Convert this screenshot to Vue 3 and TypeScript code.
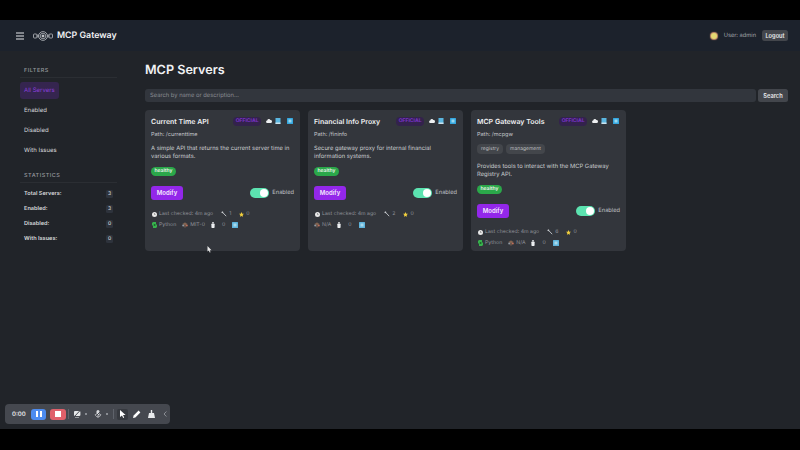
<script setup lang="ts">
interface Card {
  title: string
  path: string
  tags: string[]
  desc: string
  tools: number
  lang: boolean
  license: string
}
const cards: Card[] = [
  { title: 'Current Time API', path: 'Path: /currenttime', tags: [], desc: 'A simple API that returns the current server time in various formats.', tools: 1, lang: true, license: 'MIT-0' },
  { title: 'Financial Info Proxy', path: 'Path: /fininfo', tags: [], desc: 'Secure gateway proxy for internal financial information systems.', tools: 2, lang: false, license: 'N/A' },
  { title: 'MCP Gateway Tools', path: 'Path: /mcpgw', tags: ['registry', 'management'], desc: 'Provides tools to interact with the MCP Gateway Registry API.', tools: 6, lang: true, license: 'N/A' },
]
const filters = ['All Servers', 'Enabled', 'Disabled', 'With Issues']
const stats = [
  ['Total Servers:', '3'],
  ['Enabled:', '3'],
  ['Disabled:', '0'],
  ['With Issues:', '0'],
]
</script>

<template>
  <div class="screen">
    <div class="band"></div>
    <header class="topbar">
      <svg class="burger" viewBox="0 0 8 8" width="8" height="8"><path d="M0 1h8M0 4h8M0 7h8" stroke="#e4e6e9" stroke-width="1.2"/></svg>
      <svg class="logo" viewBox="0 0 20 10" width="20" height="10" fill="none" stroke="#cfd1d5" stroke-width=".7">
        <circle cx="10" cy="5" r="4.4"/><circle cx="10" cy="5" r="2.8"/><circle cx="10" cy="5" r="1.1" fill="#cfd1d5"/>
        <rect x=".5" y="3" width="3.4" height="4" rx=".8"/><rect x="16.1" y="3" width="3.4" height="4" rx=".8"/>
        <path d="M3.9 4.2h1.8M3.9 5.8h1.8M14.3 4.2h1.8M14.3 5.8h1.8"/>
      </svg>
      <span class="brand">MCP Gateway</span>
      <span class="spacer"></span>
      <span class="sun"></span>
      <span class="user">User: admin</span>
      <button class="ghost logout">Logout</button>
    </header>
    <div class="body">
      <aside class="side">
        <h3 class="side-h">FILTERS</h3>
        <ul class="filters">
          <li v-for="(f, i) in filters" :key="f" :class="{ active: i === 0 }">{{ f }}</li>
        </ul>
        <h3 class="side-h stats-h">STATISTICS</h3>
        <div v-for="s in stats" :key="s[0]" class="stat">
          <span>{{ s[0] }}</span><b>{{ s[1] }}</b>
        </div>
      </aside>
      <main class="main">
        <h1>MCP Servers</h1>
        <div class="search">
          <div class="input">Search by name or description...</div>
          <button class="ghost">Search</button>
        </div>
        <div class="grid">
          <article v-for="c in cards" :key="c.title" class="card">
            <div class="head">
              <h2>{{ c.title }}</h2>
              <span class="official">OFFICIAL</span>
              <svg width="6" height="4" viewBox="0 0 6 4" class="ic"><path d="M1.4 4a1.2 1.2 0 0 1-.2-2.4A1.7 1.7 0 0 1 4.4 1 1.5 1.5 0 0 1 4.6 4z" fill="#eef0f2"/></svg>
              <svg width="6" height="6" viewBox="0 0 6 6" class="ic book"><rect x=".5" width="5" height="6" fill="#5bb6e0"/><rect x=".5" y="4.6" width="5" height="1.2" fill="#e8eef2"/></svg>
              <svg width="6" height="6" viewBox="0 0 6 6" class="ic last"><rect width="6" height="6" rx=".5" fill="#35a7df"/><rect x="1.5" y="1.5" width="3" height="3" fill="#9ad8ef"/></svg>
            </div>
            <div class="path">{{ c.path }}</div>
            <div v-if="c.tags.length" class="tags"><span v-for="t in c.tags" :key="t">{{ t }}</span></div>
            <p class="desc">{{ c.desc }}</p>
            <div class="status"><span class="healthy">healthy</span></div>
            <div class="actions">
              <button class="modify">Modify</button>
              <span class="spacer"></span>
              <span class="toggle"><i></i></span>
              <span class="en">Enabled</span>
            </div>
            <div class="meta">
              <span class="m first"><svg width="5" height="5" viewBox="0 0 5 5"><circle cx="2.5" cy="2.5" r="2.5" fill="#e8e8e8"/><path d="M2.5 1v1.5h1" stroke="#555" stroke-width=".5" fill="none"/></svg>Last checked: 4m ago</span>
              <span class="m"><svg width="6" height="6" viewBox="0 0 6 6"><path d="M1.6 1.4 5.2 5.2" stroke="#c9ccd0" stroke-width=".9"/><path d="M.3 1.3 1.3.3l1 .6-.2 1-1 .3z" fill="#c9ccd0"/></svg>{{ c.tools }}</span>
              <span class="m"><svg width="5" height="5" viewBox="0 0 6 6"><path d="M3 0l.9 2 2.1.2-1.6 1.4.5 2.2L3 4.7 1.1 5.8l.5-2.2L0 2.2 2.1 2z" fill="#f1cf3e"/></svg>0</span>
            </div>
            <div class="meta second">
              <span v-if="c.lang" class="m first"><svg width="5" height="6" viewBox="0 0 5 6"><path d="M1 0h3v2.5H5V5L4 6H1V3.5H0V1z" fill="#37b24d"/><rect x="1.8" y="2" width="1.6" height="2" fill="#1e6b2d"/></svg>Python</span>
              <span class="m"><svg width="6" height="6" viewBox="0 0 6 6"><path d="M3 .5v5M.8 2h4.4" stroke="#b08060" stroke-width=".8"/><circle cx="1.2" cy="3.6" r="1" fill="#8f9aa5"/><circle cx="4.8" cy="3.6" r="1" fill="#c0705a"/></svg>{{ c.license }}</span>
              <span class="m"><svg width="4" height="6" viewBox="0 0 4 6"><rect x="1.2" width="1.6" height="1.4" fill="#d8dadd"/><rect x=".4" y="1.4" width="3.2" height="4.6" rx=".8" fill="#eceef0"/></svg></span>
              <span class="m zero">0</span>
              <svg class="zero" width="6" height="6" viewBox="0 0 6 6"><rect width="6" height="6" rx=".5" fill="#5fb4dc"/><rect x="1.5" y="1.5" width="3" height="3" fill="#a8d8ea"/></svg>
            </div>
          </article>
        </div>
      </main>
    </div>
    <div class="band bottom"></div>
    <div class="recorder">
      <span class="time">0:00</span>
      <span class="rbtn blue"><svg width="6" height="6" viewBox="0 0 6 6"><path d="M0 0h2v6H0zM4 0h2v6H4z" fill="#fff"/></svg></span>
      <span class="rbtn red"><svg width="6" height="6" viewBox="0 0 6 6"><path d="M0 0h6v6H0z" fill="#fff"/></svg></span>
      <span class="sep"></span>
      <svg class="r1" width="8" height="8" viewBox="0 0 8 8"><rect x="1" y="1" width="6.4" height="5" rx="1" fill="#e6e8ea"/><path d="M2 8h4" stroke="#e6e8ea"/><path d="M1 7 7 .6" stroke="#45484f" stroke-width="1"/></svg>
      <span class="caret"></span>
      <svg class="r2" width="8" height="8" viewBox="0 0 8 8"><rect x="2.5" y="0" width="3" height="5.5" rx="1.5" fill="#d8dadd"/><path d="M1.2 4a2.8 2.8 0 0 0 5.6 0M4 7v1" stroke="#d8dadd" stroke-width=".7" fill="none"/><path d="M.6 7.4 7.4.6" stroke="#45484f" stroke-width="1"/></svg>
      <span class="caret"></span>
      <span class="sep s2"></span>
      <span class="cursor"><svg width="7" height="8" viewBox="0 0 7 8"><path d="M1 0v7l2-1.6L4.2 8l1-.5L4 5h2.6z" fill="#fff"/></svg></span>
      <svg class="r3" width="8" height="8" viewBox="0 0 8 8"><path d="M0 8l.6-2.4L5.6.6l1.8 1.8-5 5z" fill="#fff"/></svg>
      <svg class="r4" width="7" height="8" viewBox="0 0 7 8"><path d="M2.8 0h1.4v3H6l1 5H0l1-5h1.8z" fill="#e8eaec"/></svg>
      <svg class="r5" width="4" height="6" viewBox="0 0 4 6"><path d="M3.4.5 1 3l2.4 2.5" stroke="#8b8e94" fill="none"/></svg>
    </div>
    <svg class="pointer" width="5" height="7" viewBox="0 0 5 7"><path d="M.5 0v5.6l1.3-1 .9 2 .9-.4-.9-1.9H4.5z" fill="#e8e8e8"/></svg>
  </div>
</template>

<style>
html, body { margin: 0; background: #000; }
</style>

<style scoped>
.screen {
  position: relative;
  width: 800px;
  height: 450px;
  display: flex;
  flex-direction: column;
  background: #000;
  overflow: hidden;
  font-family: Inter, "Liberation Sans", sans-serif;
  color: #e6e7e9;
  text-rendering: geometricPrecision;
}
.band { height: 20px; flex: none; background: #000; }
.band.bottom { height: 21px; }
.topbar {
  height: 31px;
  flex: none;
  display: flex;
  align-items: center;
  padding: 0 12px 0 16px;
  background: #1c222c;
}
.burger { margin-right: 9px; }
.logo { margin-right: 4px; }
.brand { font-size: 8.8px; font-weight: 600; color: #f0f1f3; }
.spacer { flex: 1; }
.sun { width: 6px; height: 6px; border-radius: 50%; background: #e3d873; box-shadow: 0 0 1px 1px #c98d6c; margin-right: 7px; }
.user { font-size: 5.7px; color: #a3a6ab; margin-right: 6px; }
button { font-family: inherit; border: 0; padding: 0; }
.ghost { width: 30px; height: 13px; background: #43464c; color: #e8e9eb; font-size: 5.7px; font-weight: 600; border-radius: 2.5px; }
.logout { width: 26px; height: 11px; }
.body { flex: 1; display: flex; background: #212429; min-height: 0; }
.side { width: 97px; margin-left: 20px; flex: none; padding-top: 17px; }
.side-h {
  margin: 0;
  font-size: 5.5px;
  font-weight: 500;
  letter-spacing: .5px;
  color: #96999e;
  padding: 0 0 3px 4px;
  border-bottom: 1px solid #2b2e33;
}
.filters { list-style: none; margin: 4px 0 0; padding: 0; }
.filters li {
  height: 17px;
  line-height: 17px;
  margin-bottom: 3px;
  padding-left: 4px;
  font-size: 6px;
  color: #d4d6d9;
  width: max-content;
  min-width: 30px;
  border-radius: 3px;
}
.filters li.active { background: #35254f; color: #8b3fd9; width: 31px; padding-right: 4px; }
.stats-h { margin-top: 14px; margin-bottom: 3px; }
.stat {
  display: flex;
  justify-content: space-between;
  align-items: center;
  height: 15.2px;
  padding: 0 4px;
  font-size: 5.6px;
  font-weight: 600;
  color: #d6d8db;
}
.stat b { background: #2e333c; font-size: 5px; width: 7px; height: 8px; line-height: 8px; text-align: center; border-radius: 1.5px; font-weight: 500; }
.main { flex: 1; padding: 12px 12px 0 28px; min-width: 0; }
h1 { margin: 0; font-size: 12.6px; line-height: 16px; font-weight: 600; color: #f1f2f4; }
.search { display: flex; gap: 2px; margin-top: 10px; }
.input {
  flex: 1;
  height: 13px;
  line-height: 13px;
  padding-left: 5px;
  font-size: 5.8px;
  color: #898c92;
  background: #32363d;
  border-radius: 3px;
}
.grid { display: grid; grid-template-columns: repeat(3, 155px); gap: 8px; margin-top: 8px; }
.card { background: #33363c; border-radius: 4px; padding: 7px 6px 6px; display: flex; flex-direction: column; height: 141px; box-sizing: border-box; }
.head { display: flex; align-items: center; height: 8px; }
h2 { margin: 0; flex: 1; font-size: 7px; font-weight: 600; color: #eff0f2; white-space: nowrap; }
.official { background: #33224c; color: #7a33c9; font-size: 5px; font-weight: 700; padding: 1.5px 2.5px; border-radius: 4px; margin-right: 5px; }
.ic { margin-right: 3px; }
.ic.book { margin-right: 6px; }
.ic.last { margin-right: 1px; }
.path { margin-top: 6px; font-size: 5.5px; line-height: 8px; color: #c4c6ca; }
.tags { display: flex; gap: 3px; margin-top: 5px; margin-bottom: 3px; }
.tags span { background: #43464b; color: #b9bbbf; font-size: 5px; line-height: 10px; padding: 0 4px; border-radius: 4px; }
.desc { margin: 6px 0 0; font-size: 5.8px; line-height: 8px; color: #cdcfd2; }
.status { display: flex; margin-top: 6px; }
.healthy { background: #2ba84a; color: #f1f5f1; font-size: 5px; font-weight: 600; line-height: 9px; padding: 0 3.5px; border-radius: 4.5px; }
.actions { display: flex; align-items: center; margin-top: 10px; }
.modify { width: 32px; height: 13.5px; background: #9327ea; color: #f3e9fd; font-size: 6px; font-weight: 600; border-radius: 3px; }
.toggle { width: 19px; height: 10px; border-radius: 5px; background: #5ce3b0; position: relative; margin-right: 3px; }
.toggle i { position: absolute; right: 1px; top: 1px; width: 8px; height: 8px; background: #fff; border-radius: 50%; }
.en { font-size: 5.7px; color: #c2c4c8; }
.meta { display: flex; align-items: center; gap: 8px; margin-top: 11px; font-size: 5.2px; line-height: 7px; color: #90939a; }
.meta.second { margin-top: 4px; gap: 6px; }
.m { display: inline-flex; align-items: center; gap: 2px; }
.m.first { margin-left: 1px; }
.m.zero { margin-left: 1px; }
svg.zero { margin-left: 1px; }
.recorder {
  position: absolute;
  left: 5px;
  top: 404px;
  width: 165px;
  height: 20px;
  box-sizing: border-box;
  padding: 0 0 0 7px;
  display: flex;
  align-items: center;
  background: #45484f;
  border-radius: 4px;
}
.time { font-size: 6px; font-weight: 600; color: #e6e7e9; width: 19px; flex: none; }
.rbtn { width: 15px; height: 11px; display: flex; align-items: center; justify-content: center; border-radius: 3px; flex: none; }
.blue { background: #4d8cf0; margin-right: 4px; }
.red { background: #e0606a; width: 16px; margin-right: 2px; }
.sep { width: 1px; height: 10px; background: #5f636b; flex: none; }
.r1 { margin-left: 4px; }
.caret { width: 2px; height: 2px; border-radius: 50%; background: #a2a5aa; margin-left: 4px; flex: none; }
.r2 { margin-left: 7px; }
.sep.s2 { margin-left: 5px; }
.cursor { width: 11px; height: 11px; margin-left: 3px; background: #36393f; border-radius: 2px; display: flex; align-items: center; justify-content: center; flex: none; }
.r3 { margin-left: 5px; }
.r4 { margin-left: 7px; }
.r5 { margin-left: 8px; }
.pointer { position: absolute; left: 207px; top: 246px; }
</style>
